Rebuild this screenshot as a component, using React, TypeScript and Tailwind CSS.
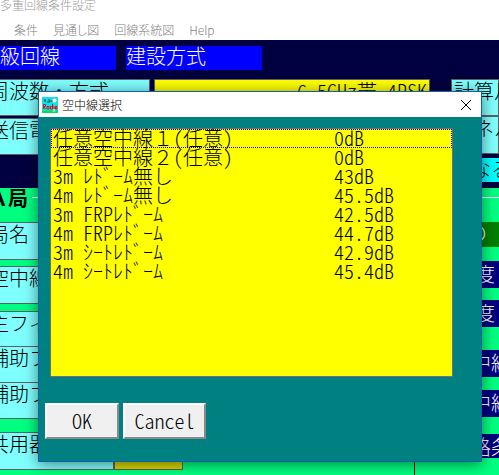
import clsx from 'clsx'
import { useState } from 'react'

const MENU_ITEMS = ['条件', '見通し図', '回線系統図', 'Help']

const ANTENNAS = [
  { name: '任意空中線', wide: '１', suffix: '(任意)', gain: '0dB' },
  { name: '任意空中線', wide: '２', suffix: '(任意)', gain: '0dB' },
  { name: '3m ﾚﾄﾞｰﾑ無し', gain: '43dB' },
  { name: '4m ﾚﾄﾞｰﾑ無し', gain: '45.5dB' },
  { name: '3m FRPﾚﾄﾞｰﾑ', gain: '42.5dB' },
  { name: '4m FRPﾚﾄﾞｰﾑ', gain: '44.7dB' },
  { name: '3m ｼｰﾄﾚﾄﾞｰﾑ', gain: '42.9dB' },
  { name: '4m ｼｰﾄﾚﾄﾞｰﾑ', gain: '45.4dB' },
]

const cell = 'border border-[#606060] bg-[#80ffff] pl-0.5'
const tag = 'shrink-0 bg-[#000080] leading-[26px] text-white'
const pushButton =
  'h-9 border-2 border-t-white border-r-[#888888] border-b-[#888888] border-l-white bg-[#f0f0f0] leading-5'

const AppIcon = () => (
  <svg viewBox="0 0 16 16" className="size-4" aria-hidden="true">
    <rect width="16" height="16" fill="#10e0e8" />
    <path d="M0 13.5h16V16H0z" fill="#00e060" />
    <path d="M2 3h2M3 3v2M6 3h2v2H5M9 4h2" stroke="#205060" fill="none" />
    <circle cx="12.5" cy="3.5" r="2" fill="#fff" />
    <path
      d="M1.5 12V7.5h2v2h-2l2 2.5M5 9.5h2V12H5zM10.500 7v5h-2V9.500h2M12 9v3M13.500 9.500h1.500V12h-1.500z"
      stroke="#e01010"
      fill="none"
    />
    <path d="M11 15l1-3 1 3" stroke="#fff" strokeWidth="0.500" fill="none" />
  </svg>
)

const MainWindow = () => (
  <div className="flex min-h-screen flex-col overflow-hidden bg-[#00ff80]">
    <header className="h-10 bg-white font-['Noto_Sans_CJK_JP',sans-serif] text-xs text-[#808080] [font-feature-settings:'palt']">
      <h1 className="h-5 leading-[10px] text-[#999999]">多重回線条件設定</h1>
      <nav className="flex gap-[15px] pl-3.5 leading-5">
        {MENU_ITEMS.map((item) => (
          <button key={item} type="button">
            {item}
          </button>
        ))}
      </nav>
    </header>

    <div className="h-[148px] bg-[#000040] pt-1.5">
      <div className="flex gap-2.5 leading-5 text-white">
        <div className="h-6 w-[116px] bg-[#0000ff]">級回線</div>
        <div className="h-6 w-[136px] bg-[#0000ff]">建設方式</div>
      </div>
      <div className="mt-[9px] -ml-[14px] flex leading-[22px]">
        <div className="flex w-[164px] shrink-0 flex-col gap-0.5">
          <div className={clsx(cell, 'h-[37px]')}>周波数・方式</div>
          <div className={clsx(cell, 'h-[37px]')}>送信電力</div>
        </div>
        <div className="ml-1 h-[37px] w-[276px] shrink-0 border border-[#606060] bg-[#ffff00] pr-0.5 text-right">
          6.5GHz帯 4PSK
        </div>
        <div className="ml-[21px] flex min-w-0 flex-1 flex-col whitespace-nowrap">
          <div className={clsx(cell, 'h-[37px]')}>計算月</div>
          <div className={clsx(cell, 'h-[38px]')}>ﾁｬネル</div>
          <div className="mt-1 h-6 bg-[#00ffff]">になる</div>
        </div>
      </div>
    </div>

    <div className="-ml-[14px] flex flex-1 justify-between leading-[22px]">
      <div className="w-[197px] shrink-0">
        <div className="flex h-[34px] items-start gap-1 pl-0.5 font-bold leading-5 [font-feature-settings:normal]">
          Ａ局
          <span className="mt-[9px] h-px flex-1 bg-white" />
        </div>
        <div className={clsx(cell, 'h-[38px] w-[164px]')}>局名</div>
        <div className={clsx(cell, 'mt-1.5 h-[38px] w-[164px]')}>空中線</div>
        <div className={clsx(cell, 'mt-[7px] h-9 w-[164px]')}>主フィーダ</div>
        <div className={clsx(cell, 'h-9 w-[164px] border-t-0')}>補助フィーダ</div>
        <div className={clsx(cell, 'h-9 w-[164px] border-t-0')}>補助フィーダ</div>
        <div className="mt-[13px] flex">
          <div className={clsx(cell, 'h-[38px] w-32')}>共用器</div>
          <div className="h-[38px] flex-1 border border-[#606060] bg-[#d8d800]" />
        </div>
      </div>
      <div className="flex w-[85px] border-l border-black pl-9 whitespace-nowrap">
        <div className="flex min-w-0 flex-1 flex-col">
          <div className="mt-[9px] h-px shrink-0 bg-white" />
          <div className="mt-6 h-[25px] shrink-0 bg-[#008000] pl-4 text-white">の</div>
          <div className={clsx(tag, 'mt-3.5 h-[27px] pl-1')}>緯度</div>
          <div className={clsx(tag, 'mt-3 h-[27px] pl-1')}>経度</div>
          <div className={clsx(tag, 'mt-[23px] h-[27px]')}>空中線</div>
          <div className={clsx(tag, 'mt-[13px] h-[27px]')}>空中線</div>
          <div className={clsx(tag, 'mt-[17px] h-6')}>回路条</div>
        </div>
      </div>
    </div>
  </div>
)

const AntennaDialog = () => {
  const [active, setActive] = useState(0)

  return (
    <div
      role="dialog"
      aria-labelledby="dialog-title"
      className="absolute top-[91px] left-[38px] w-[444px] border border-[#1060b0] bg-[#008080] shadow-[0_2px_14px_rgba(0,0,0,0.5)]"
    >
      <div className="flex h-[25px] items-center gap-1 bg-white pl-[3px] font-['Noto_Sans_CJK_JP',sans-serif] text-xs">
        <AppIcon />
        <h2 id="dialog-title">空中線選択</h2>
        <button type="button" aria-label="閉じる" className="mr-[9px] ml-auto">
          <svg viewBox="0 0 12 12" className="size-3" aria-hidden="true">
            <path d="M1 1l10 10M11 1L1 11" stroke="#000" fill="none" />
          </svg>
        </button>
      </div>
      <ul
        role="listbox"
        aria-labelledby="dialog-title"
        className="mt-[11px] mr-7 ml-[11px] h-[249px] border border-[#707070] bg-[#ffff00] text-black"
      >
        {ANTENNAS.map((antenna, index) => (
          <li
            key={index}
            role="option"
            aria-selected={index === active}
            onClick={() => setActive(index)}
            className={clsx(
              'grid h-[19px] grid-cols-[281px_1fr] border border-dotted pl-px leading-[15px]',
              index === active ? 'border-[#0000c0]' : 'border-transparent'
            )}
          >
            <span>
              {antenna.name}
              {antenna.wide && (
                <span className="[font-feature-settings:normal]">
                  {antenna.wide}
                </span>
              )}
              {antenna.suffix}
            </span>
            <span>{antenna.gain}</span>
          </li>
        ))}
      </ul>
      <div className="mt-[26px] mb-[22px] ml-1.5 flex gap-1">
        <button type="button" className={clsx(pushButton, 'w-[74px]')}>
          OK
        </button>
        <button type="button" className={clsx(pushButton, 'w-[83px]')}>
          Cancel
        </button>
      </div>
    </div>
  )
}

const App = () => (
  <div className="relative min-h-screen overflow-hidden font-['Noto_Sans_CJK_JP',monospace] text-xl font-light text-black [font-feature-settings:'hwid']">
    <MainWindow />
    <AntennaDialog />
  </div>
)

export default App
